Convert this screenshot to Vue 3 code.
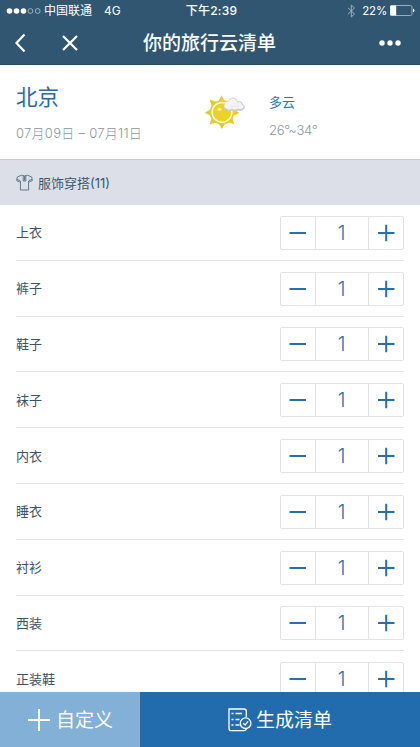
<script setup>
import { ref } from 'vue'

const items = ref(
  ['上衣', '裤子', '鞋子', '袜子', '内衣', '睡衣', '衬衫', '西装', '正装鞋'].map((name) => ({ name, count: 1 }))
)
</script>

<template>
  <div class="screen">
    <header class="header">
      <div class="status">
        <div class="carrier">
          <svg class="signal" width="36" height="8" viewBox="0 0 36 8">
            <g fill="#fff"><circle cx="3.5" cy="4" r="2.8" /><circle cx="10.5" cy="4" r="2.8" /><circle cx="17.5" cy="4" r="2.8" /></g>
            <g fill="none" stroke="#c9d7e1" stroke-width=".7"><circle cx="24.5" cy="4" r="2.4" /><circle cx="31.7" cy="4" r="2.4" /></g>
          </svg>
          <span>中国联通</span><span class="network">4G</span>
        </div>
        <time class="clock">下午2:39</time>
        <div class="power">
          <svg width="9" height="14" viewBox="0 0 9 14" fill="none" stroke="#9bb0bf" stroke-width="1"><path d="M1 3.8 7.5 10 4.3 13V1l3.2 3L1 10.2" /></svg>
          <span class="percent">22%</span>
          <svg class="battery" width="25" height="11" viewBox="0 0 25 11"><rect x=".5" y=".5" width="21.5" height="10" rx="1.5" fill="none" stroke="#b3c3ce" stroke-width=".8" /><rect x=".2" y=".5" width="6" height="10" rx=".5" fill="#fff" /><path d="M23 3.5q3 2 0 4z" fill="#fff" /></svg>
        </div>
      </div>
      <nav class="nav">
        <div class="nav-left">
          <svg width="12" height="20" viewBox="0 0 12 20"><path d="M10.5 1.5 2.5 10l8 8.5" /></svg>
          <svg width="18" height="18" viewBox="0 0 18 18"><path d="m2 2 14 14M16 2 2 16" /></svg>
        </div>
        <h1>你的旅行云清单</h1>
        <svg class="more" width="22" height="6" viewBox="0 0 22 6"><circle cx="3" cy="3" r="2.7" /><circle cx="11" cy="3" r="2.7" /><circle cx="19" cy="3" r="2.7" /></svg>
      </nav>
    </header>

    <section class="trip">
      <div class="place">
        <h2>北京</h2>
        <p>07月09日 – 07月11日</p>
      </div>
      <svg class="sun" width="42" height="36" viewBox="0 0 42 36">
        <path fill="#e6c92a" d="M17.5 1.2 21.5 9h-8zM5.5 5.5l8.5 2.8-5.6 5.4zM.8 18.8l7.4-4.6v8.4zM5.5 30.5l2.6-8.5 5.9 5.7zM18 35l-4.6-7.5h8.6zM30.3 30.2l-8.3-2.6 5.5-5.8zM35.5 18.8l-7.8 3.7v-8z" />
        <circle cx="18" cy="18.3" r="12.3" fill="#e8cc2c" />
        <circle cx="18" cy="18.3" r="9.9" fill="#ecd12b" stroke="#fffbe0" stroke-width="1.5" />
        <ellipse cx="15.5" cy="15.3" rx="2.2" ry="1.6" fill="#faed9a" />
        <path fill="#cbcbd1" d="M22.5 16.2q-4.2-1.6-2.2-5-.5-4.2 3.9-4.3Q26.5 1.9 31 4q2.6 1 2.7 3.5 4.2-1.2 4.8 2.6 4 2.2 1.4 5.2-2.3 2.5-5.8 1.1-3 2.6-6 .4-3.7 1.7-5.6-.6z" />
        <path fill="#f4f4f6" d="M22.7 14.5q-3.6-1.2-2-3.9-.2-3.2 4-3.1 2.2-4.7 6.3-2.7 2.2 1 2.1 3.6 4.1-1.3 4.5 2.2 3.4 1.9 1.2 3.6-2 1.3-5 .3-2.8 2-5.5.2-3.6 1.6-5.6-.2z" />
        <path d="M26 11.5q2 1.7 4.5.2 2.3 1.7 4.5.1" fill="none" stroke="#dedee3" stroke-width=".8" />
      </svg>
      <div class="weather">
        <strong>多云</strong>
        <span>26<i>°</i>~34<i>°</i></span>
      </div>
    </section>

    <div class="category">
      <svg width="17" height="17" viewBox="0 0 17 17" fill="none" stroke="#5c7a8c" stroke-width="1"><path d="M5.5 1.2 1.3 3 .6 6.6l2.9 1.2.9-.8v9h8.2V7l.9.8 2.9-1.2-.7-3.6-4.2-1.8q-3 1.5-6 0ZM1 5.5l3 1m12-1-3 1M7.2 2v5h2.6V2M8.5 2v4.5" /></svg>
      <span>服饰穿搭(11)</span>
    </div>

    <main class="list">
      <div v-for="item in items" :key="item.name" class="row">
        <span class="name">{{ item.name }}</span>
        <div class="stepper">
          <button aria-label="减少" @click="item.count = Math.max(0, item.count - 1)"><svg width="18" height="18" viewBox="0 0 18 18"><path d="M.5 9H17" /></svg></button>
          <output>{{ item.count }}</output>
          <button aria-label="增加" @click="item.count++"><svg width="18" height="18" viewBox="0 0 18 18"><path d="M1 9h16.5M9.2.8v16.4" /></svg></button>
        </div>
      </div>
    </main>

    <footer class="footer">
      <button class="custom">
        <svg width="24" height="24" viewBox="0 0 24 24" fill="none" stroke="#fff" stroke-width="2"><path d="M1 12h22M12 1v22" /></svg>
        <span>自定义</span>
      </button>
      <button class="generate">
        <svg width="24" height="24" viewBox="0 0 24 24" fill="none" stroke="#fff" stroke-width="1.3"><path d="M18.3 9V3.2Q18.3 1 16 1H1v19.5Q1 22.7 3.3 22.7H16q2 0 2.3-1.9M3.5 5.5h2M7.5 5.5H14M3.5 11.5h2m2 0h4M3.5 17h2m2 0h4" /><circle cx="17.6" cy="15.2" r="5.3" /><path d="m15.2 15.2 1.9 1.8 3-3.6" /></svg>
        <span>生成清单</span>
      </button>
    </footer>
  </div>
</template>

<style>
body { margin: 0; overflow: hidden; }
</style>

<style scoped>
* { box-sizing: border-box; }
.screen { display: flex; flex-direction: column; width: 420px; height: 747px; overflow: hidden; background: #fff; font-family: Inter, "Noto Sans CJK SC", sans-serif; color: #3c5364; }
h1, h2, p { margin: 0; font-weight: 400; }
button { display: flex; align-items: center; justify-content: center; margin: 0; padding: 0; border: 0; background: none; color: inherit; font: inherit; }
svg { display: block; flex: none; }
.header { flex: none; height: 65px; background: #315672; color: #fff; border-bottom: 1px solid #294b65; }
.status { display: grid; grid-template-columns: 1fr auto 1fr; align-items: center; height: 21px; padding: 0 5px 0 6px; font-size: 12px; line-height: 20px; }
.carrier { display: flex; align-items: center; }
.signal { margin-right: 2px; }
.network { margin-left: 12px; }
.clock { padding-left: 2px; font-weight: 500; letter-spacing: .2px; }
.power { display: flex; align-items: center; justify-content: flex-end; }
.percent { margin: 0 3px 0 6px; font-size: 11.5px; letter-spacing: -.2px; }
.nav { display: grid; grid-template-columns: 1fr auto 1fr; align-items: center; height: 43px; padding: 0 19px 0 14px; }
.nav-left { display: flex; align-items: center; gap: 35px; fill: none; stroke: #fff; stroke-width: 2.2; }
.nav h1 { padding: 2px 0 0 4px; font-size: 19px; line-height: 28px; font-weight: 500; }
.more { justify-self: end; fill: #fff; }
.trip { display: flex; flex: none; height: 95px; border-bottom: 1px solid #c9cccd; }
.place { width: 204px; padding: 17px 0 0 16px; }
.place h2 { font-size: 21.5px; line-height: 30px; color: #236bac; }
.place p { margin-top: 11px; font-size: 13px; line-height: 20px; font-weight: 300; letter-spacing: .27px; color: #89969f; white-space: nowrap; }
.sun { margin-top: 29px; }
.weather { display: flex; flex-direction: column; padding: 27px 0 0 23px; }
.weather strong { font-size: 13px; line-height: 20px; font-weight: 400; color: #3674a4; }
.weather span { margin-top: 8px; font-size: 13px; line-height: 20px; font-weight: 300; letter-spacing: -.3px; color: #89969f; }
.weather i { font-style: normal; letter-spacing: -1.8px; }
.category { display: flex; flex: none; align-items: center; gap: 5px; height: 45px; padding: 0 16px; background: #dddfe8; color: #365a72; font-size: 13px; line-height: 20px; }
.list { flex: 1; min-height: 0; overflow: hidden; padding: 0 16px; }
.row { display: flex; align-items: center; justify-content: space-between; height: 55.8px; border-bottom: 1px solid #e1e3e5; font-size: 13px; }
.name { line-height: 20px; }
.stepper { display: grid; grid-template-columns: 34px 54px 34px; width: 124px; height: 34px; margin-top: 1px; border: 1px solid #e1e3e5; border-radius: 2px; }
.stepper svg { fill: none; stroke: #2670ad; stroke-width: 2; }
.stepper output { display: flex; align-items: center; justify-content: center; padding-right: 1px; border: solid #e1e3e5; border-width: 0 1px; font-size: 19.5px; font-weight: 300; color: #2670ad; }
.footer { display: flex; flex: none; height: 55px; color: #fff; font-size: 19px; line-height: 28px; }
.footer span { padding-top: 3px; }
.custom { width: 140px; gap: 5px; background: #82b0d6; }
.generate { flex: 1; gap: 4px; background: #226cad; }
</style>
